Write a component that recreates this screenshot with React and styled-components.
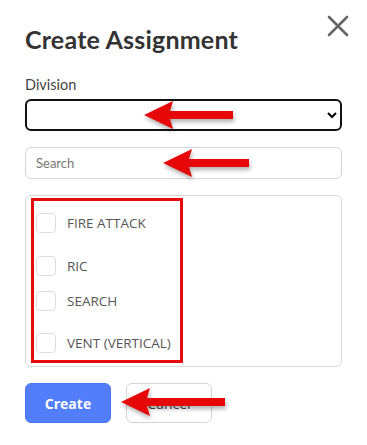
import React from 'react';
import styled, {createGlobalStyle} from 'styled-components';

const GlobalStyle = createGlobalStyle`
  html, body {
    margin: 0;
    padding: 0;
    background: #fff;
  }
  * { box-sizing: border-box; }
`;

const Modal = styled.div`
  position: relative;
  width: 367px;
  height: 445px;
  padding: 22px 25px 0 25px;
  background: #fff;
  font-family: "Open Sans", "Liberation Sans", sans-serif;
  overflow: hidden;
`;

const CloseButton = styled.button`
  position: absolute;
  top: 14px;
  right: 17px;
  width: 24px;
  height: 24px;
  padding: 0;
  border: none;
  background: none;
  cursor: pointer;
`;

const Title = styled.h2`
  margin: 0 0 20px 0;
  font-family: "Lato", "Open Sans", sans-serif;
  font-weight: 700;
  font-size: 25px;
  line-height: 34px;
  color: #333;
  letter-spacing: 0.2px;
`;

const Label = styled.label`
  display: block;
  font-family: "Lato", sans-serif;
  font-size: 14.5px;
  color: #444;
  margin-bottom: 6px;
`;

const Select = styled.select`
  display: block;
  width: 100%;
  height: 32px;
  border: 2px solid #111;
  border-radius: 6px;
  background: #fff;
  font-size: 14px;
  margin-bottom: 16px;
  outline: none;
`;

const SearchInput = styled.input`
  display: block;
  width: 100%;
  height: 32px;
  padding: 0 10px;
  border: 1px solid #d6d6d6;
  border-radius: 6px;
  font-family: "Lato", sans-serif;
  font-size: 13px;
  color: #333;
  margin-bottom: 16px;
  &::placeholder { color: #777; }
`;

const ListBox = styled.div`
  height: 172px;
  border: 1px solid #d9d9d9;
  border-radius: 6px;
  padding: 17px 10px 0 10px;
  margin-bottom: 16px;
`;

const Option = styled.label`
  display: flex;
  align-items: center;
  gap: 11px;
  height: 19px;
  margin-bottom: ${p => p.$gap}px;
  font-size: 13.5px;
  color: #555;
`;

const Box = styled.span`
  width: 20px;
  height: 20px;
  border: 1px solid #ddd;
  border-radius: 4px;
  background: #fff;
`;

const Actions = styled.div`
  display: flex;
  gap: 15px;
`;

const Button = styled.button`
  width: 86px;
  height: 40px;
  border-radius: 6px;
  font-family: "Open Sans", sans-serif;
  font-size: 14px;
  font-weight: ${p => (p.$primary ? 700 : 400)};
  color: ${p => (p.$primary ? '#fff' : '#444')};
  background: ${p => (p.$primary ? '#527dfb' : '#fff')};
  border: 1px solid ${p => (p.$primary ? '#4d77f0' : '#d4d4d4')};
`;

const Highlight = styled.div`
  position: absolute;
  left: 31px;
  top: 198px;
  width: 152px;
  height: 165px;
  border: 3px solid #e60a0a;
  pointer-events: none;
`;

const ArrowSvg = styled.svg`
  position: absolute;
  overflow: visible;
  pointer-events: none;
  filter: drop-shadow(1px 3px 2px rgba(0, 0, 0, 0.3));
`;

function Arrow({x, y, length}) {
  return (
    <ArrowSvg
      width={length}
      height={28}
      style={{left: x, top: y - 14}}
      viewBox={`0 0 ${length} 28`}
    >
      <polygon
        points={`0,14 29,0 26,10 ${length},10 ${length},18 26,18 29,28`}
        fill="#e60808"
      />
    </ArrowSvg>
  );
}

const options = [
  {name: 'FIRE ATTACK', gap: 24},
  {name: 'RIC', gap: 16},
  {name: 'SEARCH', gap: 23},
  {name: 'VENT (VERTICAL)', gap: 0}
];

export default function App() {
  return (
    <>
      <GlobalStyle />
      <Modal>
        <CloseButton aria-label="Close">
          <svg width="24" height="24" viewBox="0 0 24 24">
            <path d="M3 3 L21 21 M21 3 L3 21" stroke="#666" strokeWidth="2.6" strokeLinecap="round" />
          </svg>
        </CloseButton>
        <Title>Create Assignment</Title>
        <Label>Division</Label>
        <Select defaultValue="">
          <option value=""></option>
        </Select>
        <SearchInput placeholder="Search" />
        <ListBox>
          {options.map(o => (
            <Option key={o.name} $gap={o.gap}>
              <Box />
              {o.name}
            </Option>
          ))}
        </ListBox>
        <Actions>
          <Button $primary>Create</Button>
          <Button>Cancel</Button>
        </Actions>
        <Highlight />
        <Arrow x={144} y={115} length={89} />
        <Arrow x={163} y={163} length={86} />
        <Arrow x={121} y={402} length={104} />
      </Modal>
    </>
  );
}
